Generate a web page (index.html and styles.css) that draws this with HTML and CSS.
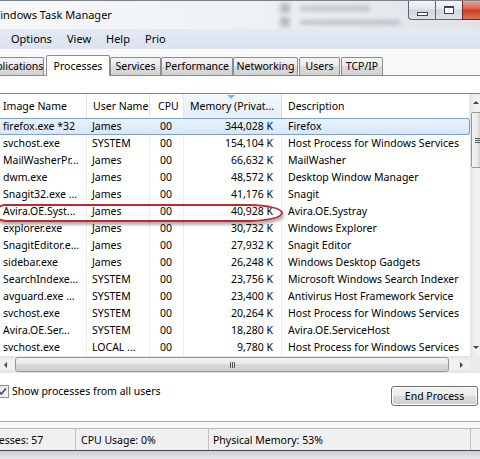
FILE: index.html
```html
<html>
    <head>
        <meta charset="UTF-8">
        <link rel="stylesheet" href="styles.css">
    </head>
    <body>
        <div class="window">
            <div class="titlebar">
                <span class="title">Windows Task Manager</span>
                <div class="ghost">
                    <div class="ghost-line"><span class="ghost-icon"></span><span class="ghost-text"></span></div>
                    <div class="ghost-line"><span class="ghost-icon"></span><span class="ghost-text long"></span></div>
                </div>
                <div class="caption">
                    <div class="cbtn min"><span></span></div>
                    <div class="cbtn max"><span></span></div>
                    <div class="cbtn close"></div>
                </div>
            </div>

            <div class="menubar">
                <span class="menu w-options">Options</span>
                <span class="menu w-view">View</span>
                <span class="menu w-help">Help</span>
                <span class="menu">Prio</span>
            </div>

            <div class="tabstrip">
                <div class="tab t-apps">Applications</div>
                <div class="tab t-proc active">Processes</div>
                <div class="tab t-serv">Services</div>
                <div class="tab t-perf">Performance</div>
                <div class="tab t-net">Networking</div>
                <div class="tab t-users">Users</div>
                <div class="tab t-tcp">TCP/IP</div>
            </div>

            <div class="page">
                <div class="list">
                    <div class="list-main">
                        <div class="grid">
                            <div class="row head">
                                <div class="c1">Image Name</div>
                                <div class="c2">User Name</div>
                                <div class="c3">CPU</div>
                                <div class="c4 sorted">Memory (Privat...</div>
                                <div class="c5">Description</div>
                            </div>
                            <div class="rows">
                                <div class="row selected"><div class="c1">firefox.exe *32</div><div class="c2">James</div><div class="c3">00</div><div class="c4">344,028 K</div><div class="c5">Firefox</div></div>
                                <div class="row"><div class="c1">svchost.exe</div><div class="c2">SYSTEM</div><div class="c3">00</div><div class="c4">154,104 K</div><div class="c5">Host Process for Windows Services</div></div>
                                <div class="row"><div class="c1">MailWasherPr...</div><div class="c2">James</div><div class="c3">00</div><div class="c4">66,632 K</div><div class="c5">MailWasher</div></div>
                                <div class="row"><div class="c1">dwm.exe</div><div class="c2">James</div><div class="c3">00</div><div class="c4">48,572 K</div><div class="c5">Desktop Window Manager</div></div>
                                <div class="row"><div class="c1">Snagit32.exe ...</div><div class="c2">James</div><div class="c3">00</div><div class="c4">41,176 K</div><div class="c5">Snagit</div></div>
                                <div class="row"><div class="c1">Avira.OE.Syst...</div><div class="c2">James</div><div class="c3">00</div><div class="c4">40,928 K</div><div class="c5">Avira.OE.Systray</div></div>
                                <div class="row"><div class="c1">explorer.exe</div><div class="c2">James</div><div class="c3">00</div><div class="c4">30,732 K</div><div class="c5">Windows Explorer</div></div>
                                <div class="row"><div class="c1">SnagitEditor.e...</div><div class="c2">James</div><div class="c3">00</div><div class="c4">27,932 K</div><div class="c5">Snagit Editor</div></div>
                                <div class="row"><div class="c1">sidebar.exe</div><div class="c2">James</div><div class="c3">00</div><div class="c4">26,248 K</div><div class="c5">Windows Desktop Gadgets</div></div>
                                <div class="row"><div class="c1">SearchIndexe...</div><div class="c2">SYSTEM</div><div class="c3">00</div><div class="c4">23,756 K</div><div class="c5">Microsoft Windows Search Indexer</div></div>
                                <div class="row"><div class="c1">avguard.exe ...</div><div class="c2">SYSTEM</div><div class="c3">00</div><div class="c4">23,400 K</div><div class="c5">Antivirus Host Framework Service</div></div>
                                <div class="row"><div class="c1">svchost.exe</div><div class="c2">SYSTEM</div><div class="c3">00</div><div class="c4">20,264 K</div><div class="c5">Host Process for Windows Services</div></div>
                                <div class="row"><div class="c1">Avira.OE.Ser...</div><div class="c2">SYSTEM</div><div class="c3">00</div><div class="c4">18,280 K</div><div class="c5">Avira.OE.ServiceHost</div></div>
                                <div class="row"><div class="c1">svchost.exe</div><div class="c2">LOCAL ...</div><div class="c3">00</div><div class="c4">9,780 K</div><div class="c5">Host Process for Windows Services</div></div>

                                <!-- hand drawn marker round the Avira row -->
                                <div class="circle"></div>
                            </div>
                        </div>
                        <div class="vscroll">
                            <div class="sbtn"><span class="arrow up"></span></div>
                            <div class="vthumb"><span></span><span></span><span></span></div>
                            <div class="vtrack"></div>
                            <div class="sbtn"><span class="arrow down"></span></div>
                        </div>
                    </div>
                    <div class="hscroll">
                        <div class="sbtn"><span class="arrow left"></span></div>
                        <div class="htrack">
                            <div class="hthumb"><span></span><span></span><span></span></div>
                        </div>
                        <div class="sbtn"><span class="arrow right"></span></div>
                        <div class="corner"></div>
                    </div>
                </div>

                <div class="controls">
                    <label class="check">
                        <span class="box">
                            <svg width="11" height="11" viewBox="0 0 11 11"><path d="M2 5.5 L4.3 8 L9 2.5" fill="none" stroke="#3d5585" stroke-width="1.8"/></svg>
                        </span>
                        Show processes from all users
                    </label>
                    <button class="endbtn">End Process</button>
                </div>
            </div>

            <div class="statusbar">
                <div class="panel p1">Processes: 57</div>
                <div class="panel p2">CPU Usage: 0%</div>
                <div class="panel p3">Physical Memory: 53%</div>
                <div class="panel p4"></div>
            </div>
            <div class="frame-bottom"></div>
        </div>
    </body>
</html>
```

FILE: styles.css
```css
html, body {
    margin: 0;
    padding: 0;
    overflow: hidden;
}

body {
    width: 480px;
    height: 459px;
    font-family: "Noto Sans", "Open Sans", sans-serif;
    font-size: 10.5px;
    color: #000;
    background: #f9f9f9;
}

.window {
    width: 480px;
}

/* title bar (aero glass) */
.titlebar {
    display: flex;
    height: 29px;
    box-sizing: border-box;
    border-top: 1px solid #7c828c;
    background: linear-gradient(to right, #f7f8fa 0%, #eef0f3 55%, #dfe2e7 100%);
}

.title {
    margin-left: -10px;
    font-size: 11px;
    line-height: 27px;
    white-space: nowrap;
    text-shadow: 0 0 6px #fff, 0 0 3px #fff;
}

.ghost {
    margin-left: auto;
    width: 125px;
    margin-right: 3px;
    filter: blur(2px);
    opacity: 0.55;
}

.ghost-line {
    display: flex;
    gap: 10px;
    height: 14px;
    align-items: center;
}

.ghost-icon {
    width: 10px;
    height: 10px;
    background: #8d939c;
}

.ghost-text {
    width: 70px;
    height: 5px;
    background: #9ca2aa;
}

.ghost-text.long {
    width: 100px;
}

.caption {
    display: flex;
    height: 19px;
    margin-right: -27px;
    flex-shrink: 0;
}

.cbtn {
    box-sizing: border-box;
    height: 19px;
    border-bottom: 1px solid #5b6574;
    border-left: 1px solid #5b6574;
    display: flex;
    justify-content: center;
}

.min {
    width: 27px;
    border-bottom-left-radius: 4px;
    background: linear-gradient(#f3f5f8, #e2e6ec 45%, #cfd5de 50%, #dfe4ea);
    align-items: flex-end;
    padding-bottom: 3px;
}

.min span {
    width: 9px;
    height: 2px;
    border: 1px solid #3a4350;
    background: #fff;
}

.max {
    width: 27px;
    background: linear-gradient(#f3f5f8, #e2e6ec 45%, #cfd5de 50%, #dfe4ea);
    align-items: flex-start;
    padding-top: 5px;
}

.max span {
    width: 8px;
    height: 5px;
    border: 1px solid #3a4350;
    border-top-width: 2px;
    background: #fff;
}

.close {
    width: 45px;
    border-color: #6b2a20;
    background: linear-gradient(#eaa596, #d9604a 45%, #c63a22 50%, #d7765a);
}

/* menu */
.menubar {
    display: flex;
    height: 20px;
    padding-left: 11px;
    font-size: 11px;
    line-height: 20px;
    background: linear-gradient(#e4eaf4, #dae3f0);
}

.w-options { width: 56px; }
.w-view { width: 39px; }
.w-help { width: 39px; }

/* tabs */
.tabstrip {
    display: flex;
    align-items: flex-end;
    height: 26px;
}

.tab {
    box-sizing: border-box;
    height: 18px;
    line-height: 16px;
    text-align: center;
    white-space: nowrap;
    border: 1px solid #898c95;
    border-bottom: none;
    border-radius: 2px 2px 0 0;
    background: linear-gradient(#f4f4f4, #eaeaea 50%, #dcdcdc 50%, #d2d2d2);
}

.tab.active {
    position: relative;
    height: 21px;
    line-height: 20px;
    margin-bottom: -1px;
    background: #fff;
}

.t-apps { margin-left: -18px; width: 62px; }
.t-proc { margin-left: 2px; width: 64px; }
.t-serv { width: 51px; }
.t-perf { width: 72px; }
.t-net { width: 65px; }
.t-users { margin-left: 1px; width: 41px; }
.t-tcp { margin-left: 1px; width: 42px; }

/* page */
.page {
    height: 328px;
    padding-top: 17px;
    background: #fff;
    border-top: 1px solid #898c95;
    border-bottom: 1px solid #a3a3a3;
}

.list {
    margin-left: -3px;
    width: 490px;
    border-top: 1px solid #828790;
    background: #fff;
}

.list-main {
    display: flex;
}

.grid {
    width: 473px;
}

.row {
    display: grid;
    grid-template-columns: 90px 63px 34px 98px 188px;
    height: 17px;
    line-height: 17px;
    white-space: nowrap;
}

.row > div {
    border-right: 1px solid #efefef;
    overflow: hidden;
}

.row .c1 { padding-left: 6px; }
.row .c2 { padding-left: 5px; }
.row .c3 { padding-left: 10px; }
.row .c4 { text-align: right; padding-right: 8px; }
.row .c5 { padding-left: 6px; border-right: none; }

.row.head {
    height: 24px;
    line-height: 24px;
}

.row.head > div {
    border-right: 1px solid #e2e7ed;
}

.row.head .c2 { padding-left: 6px; }
.row.head .c3 { padding-left: 8px; }
.row.head .c4 {
    text-align: left;
    padding-left: 6px;
    position: relative;
    background: linear-gradient(#f2f8fd, #e4effa);
    border-right-color: #c9dbec;
}

.row.head .c4::before {
    content: "";
    position: absolute;
    left: 43px;
    top: 1px;
    border-left: 4px solid transparent;
    border-right: 4px solid transparent;
    border-top: 4px solid #91aecd;
}

.rows {
    position: relative;
}

.row.selected {
    border-radius: 3px;
    background: linear-gradient(#eaf3fd, #d5e6fa);
    box-shadow: inset 0 0 0 1px #7da2ce;
}

.row.selected > div {
    border-right-color: transparent;
}

.circle {
    position: absolute;
    left: -3px;
    top: 86px;
    width: 289px;
    height: 18px;
    box-sizing: border-box;
    border: 2px solid #c1272d;
    border-radius: 12px 34px 34px 12px / 9px 9px 9px 9px;
    box-shadow: 1px 3px 3px rgba(0, 0, 0, 0.3);
}

/* scrollbars */
.vscroll {
    width: 17px;
    display: flex;
    flex-direction: column;
    background: linear-gradient(to right, #e3e3e3, #f1f1f1 30%, #f1f1f1 70%, #e3e3e3);
}

.sbtn {
    width: 17px;
    height: 17px;
    flex-shrink: 0;
    display: flex;
    align-items: center;
    justify-content: center;
}

.vscroll .sbtn {
    justify-content: flex-start;
    padding-left: 3px;
    box-sizing: border-box;
}

.arrow {
    width: 0;
    height: 0;
}

.arrow.up {
    border-left: 3px solid transparent;
    border-right: 3px solid transparent;
    border-bottom: 3px solid #444;
}

.arrow.down {
    border-left: 3px solid transparent;
    border-right: 3px solid transparent;
    border-top: 3px solid #444;
}

.arrow.left {
    border-top: 3px solid transparent;
    border-bottom: 3px solid transparent;
    border-right: 3px solid #444;
}

.arrow.right {
    border-top: 3px solid transparent;
    border-bottom: 3px solid transparent;
    border-left: 3px solid #444;
}

.vthumb {
    box-sizing: border-box;
    margin: 1px 1px 0 1px;
    height: 56px;
    border: 1px solid #979797;
    border-radius: 2px;
    background: linear-gradient(to right, #f4f4f4, #e6e6e6 50%, #d9d9d9 50%, #d0d0d0);
    display: flex;
    flex-direction: column;
    justify-content: center;
    align-items: center;
    gap: 1px;
}

.vthumb span {
    width: 7px;
    height: 1px;
    background: #555;
}

.vtrack {
    flex: 1;
}

.hscroll {
    display: flex;
    height: 17px;
    background: linear-gradient(#e3e3e3, #f1f1f1 30%, #f1f1f1 70%, #e3e3e3);
}

.htrack {
    flex: 1;
}

.hthumb {
    box-sizing: border-box;
    margin: 1px 0 0 1px;
    width: 434px;
    height: 15px;
    border: 1px solid #979797;
    border-radius: 3px;
    background: linear-gradient(#f4f4f4, #e6e6e6 50%, #d9d9d9 50%, #d0d0d0);
    display: flex;
    justify-content: center;
    align-items: center;
    gap: 1px;
}

.hthumb span {
    width: 1px;
    height: 6px;
    background: #555;
}

.corner {
    width: 17px;
    background: #eaeaea;
}

/* checkbox and button */
.controls {
    display: flex;
    justify-content: space-between;
    align-items: flex-start;
    margin-top: 12px;
}

.check {
    display: flex;
    align-items: center;
    gap: 3px;
    margin-left: -4px;
    height: 13px;
    line-height: 13px;
    white-space: nowrap;
}

.box {
    box-sizing: border-box;
    width: 13px;
    height: 13px;
    border: 1px solid #8e8f8f;
    background: linear-gradient(135deg, #e0e0e0, #fbfbfb);
    display: flex;
    align-items: center;
    justify-content: center;
}

.endbtn {
    margin-top: 1px;
    margin-right: 2px;
    width: 87px;
    height: 20px;
    padding: 0;
    font-family: inherit;
    font-size: 10.5px;
    color: #000;
    border: 1px solid #707070;
    border-radius: 3px;
    background: linear-gradient(#f2f2f2, #ebebeb 50%, #dddddd 50%, #cfcfcf);
    box-shadow: inset 0 0 0 1px #fcfcfc;
}

/* status bar */
.statusbar {
    display: flex;
    margin-top: 6px;
    height: 21px;
    line-height: 22px;
    border-top: 1px solid #b9b9b9;
    border-bottom: 1px solid #474747;
    background: #f0f0f0;
    white-space: nowrap;
}

.panel {
    box-sizing: border-box;
    border-right: 1px solid #c2c2c2;
    flex-shrink: 0;
}

.p1 { margin-left: -28px; width: 104px; padding-left: 5px; }
.p2 { width: 133px; padding-left: 5px; }
.p3 { width: 262px; padding-left: 4px; }
.p4 { width: 20px; border-right: none; }

.frame-bottom {
    height: 8px;
    background: linear-gradient(#c9cdd3, #e6e8eb);
}
```
